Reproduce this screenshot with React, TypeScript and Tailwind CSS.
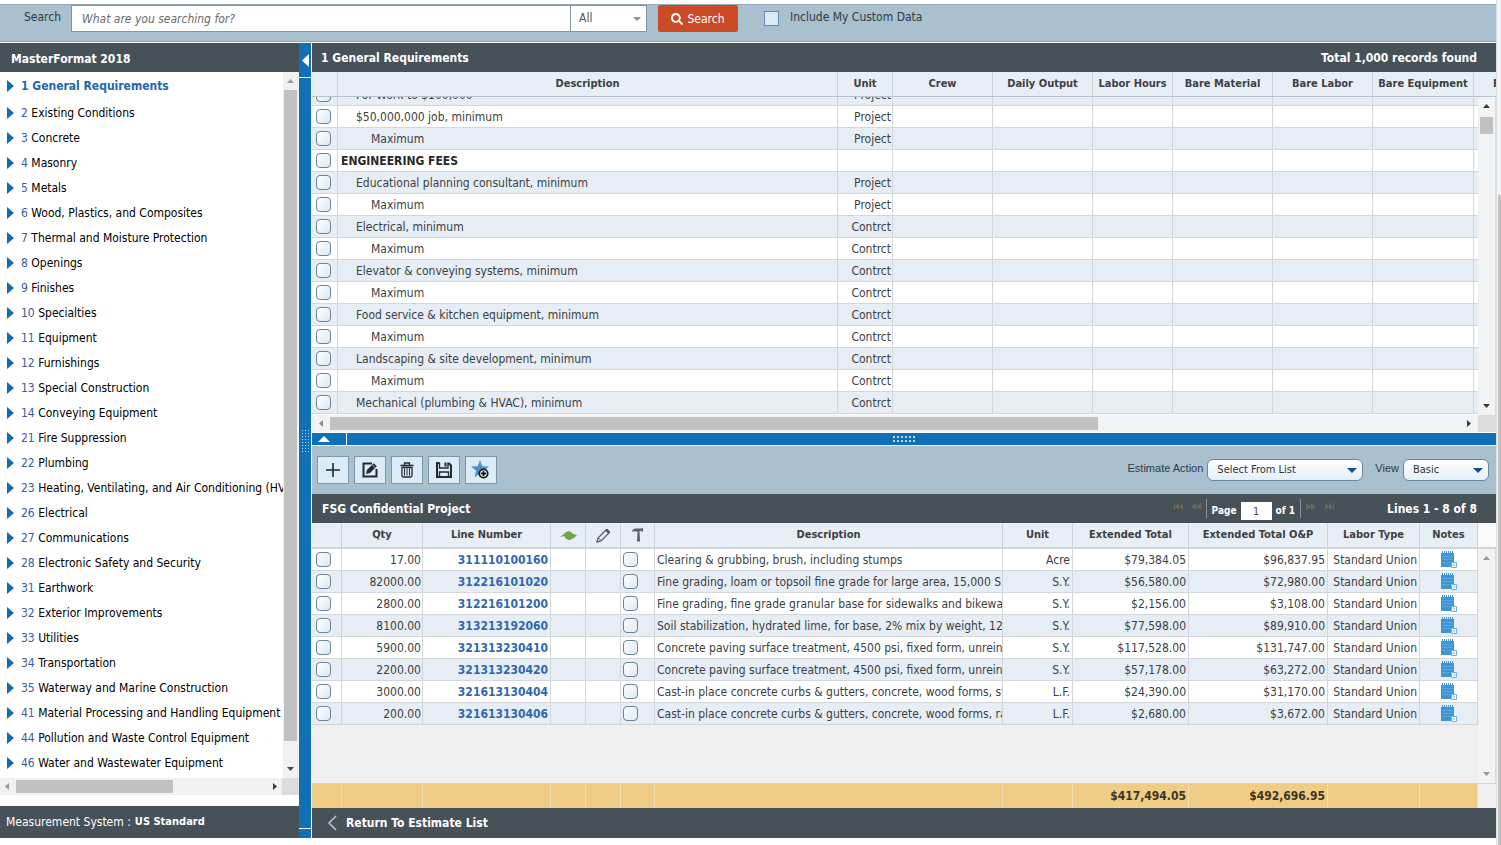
import { useState } from "react";
import { FaSearch } from "react-icons/fa";

interface Division {
  number: string;
  name: string;
}

interface CostRow {
  description: string;
  unit: string;
  level: 0 | 1 | 2;
}

interface EstimateLine {
  qty: string;
  lineNumber: string;
  description: string;
  unit: string;
  total: string;
  totalOp: string;
}

const divisions: Division[] = [
  { number: "2", name: "Existing Conditions" },
  { number: "3", name: "Concrete" },
  { number: "4", name: "Masonry" },
  { number: "5", name: "Metals" },
  { number: "6", name: "Wood, Plastics, and Composites" },
  { number: "7", name: "Thermal and Moisture Protection" },
  { number: "8", name: "Openings" },
  { number: "9", name: "Finishes" },
  { number: "10", name: "Specialties" },
  { number: "11", name: "Equipment" },
  { number: "12", name: "Furnishings" },
  { number: "13", name: "Special Construction" },
  { number: "14", name: "Conveying Equipment" },
  { number: "21", name: "Fire Suppression" },
  { number: "22", name: "Plumbing" },
  { number: "23", name: "Heating, Ventilating, and Air Conditioning (HVAC)" },
  { number: "26", name: "Electrical" },
  { number: "27", name: "Communications" },
  { number: "28", name: "Electronic Safety and Security" },
  { number: "31", name: "Earthwork" },
  { number: "32", name: "Exterior Improvements" },
  { number: "33", name: "Utilities" },
  { number: "34", name: "Transportation" },
  { number: "35", name: "Waterway and Marine Construction" },
  { number: "41", name: "Material Processing and Handling Equipment" },
  { number: "44", name: "Pollution and Waste Control Equipment" },
  { number: "46", name: "Water and Wastewater Equipment" },
];

const costRows: CostRow[] = [
  { description: "For Work to $100,000", unit: "Project", level: 1 },
  { description: "$50,000,000 job, minimum", unit: "Project", level: 1 },
  { description: "Maximum", unit: "Project", level: 2 },
  { description: "ENGINEERING FEES", unit: "", level: 0 },
  {
    description: "Educational planning consultant, minimum",
    unit: "Project",
    level: 1,
  },
  { description: "Maximum", unit: "Project", level: 2 },
  { description: "Electrical, minimum", unit: "Contrct", level: 1 },
  { description: "Maximum", unit: "Contrct", level: 2 },
  {
    description: "Elevator & conveying systems, minimum",
    unit: "Contrct",
    level: 1,
  },
  { description: "Maximum", unit: "Contrct", level: 2 },
  {
    description: "Food service & kitchen equipment, minimum",
    unit: "Contrct",
    level: 1,
  },
  { description: "Maximum", unit: "Contrct", level: 2 },
  {
    description: "Landscaping & site development, minimum",
    unit: "Contrct",
    level: 1,
  },
  { description: "Maximum", unit: "Contrct", level: 2 },
  {
    description: "Mechanical (plumbing & HVAC), minimum",
    unit: "Contrct",
    level: 1,
  },
];

const costColumns = [
  "Description",
  "Unit",
  "Crew",
  "Daily Output",
  "Labor Hours",
  "Bare Material",
  "Bare Labor",
  "Bare Equipment",
  "Bare Total",
];

const estimateLines: EstimateLine[] = [
  {
    qty: "17.00",
    lineNumber: "311110100160",
    description: "Clearing & grubbing, brush, including stumps",
    unit: "Acre",
    total: "$79,384.05",
    totalOp: "$96,837.95",
  },
  {
    qty: "82000.00",
    lineNumber: "312216101020",
    description:
      "Fine grading, loam or topsoil fine grade for large area, 15,000 S.Y.",
    unit: "S.Y.",
    total: "$56,580.00",
    totalOp: "$72,980.00",
  },
  {
    qty: "2800.00",
    lineNumber: "312216101200",
    description:
      "Fine grading, fine grade granular base for sidewalks and bikeways",
    unit: "S.Y.",
    total: "$2,156.00",
    totalOp: "$3,108.00",
  },
  {
    qty: "8100.00",
    lineNumber: "313213192060",
    description:
      'Soil stabilization, hydrated lime, for base, 2% mix by weight, 12"',
    unit: "S.Y.",
    total: "$77,598.00",
    totalOp: "$89,910.00",
  },
  {
    qty: "5900.00",
    lineNumber: "321313230410",
    description:
      "Concrete paving surface treatment, 4500 psi, fixed form, unreinforced",
    unit: "S.Y.",
    total: "$117,528.00",
    totalOp: "$131,747.00",
  },
  {
    qty: "2200.00",
    lineNumber: "321313230420",
    description:
      "Concrete paving surface treatment, 4500 psi, fixed form, unreinforced",
    unit: "S.Y.",
    total: "$57,178.00",
    totalOp: "$63,272.00",
  },
  {
    qty: "3000.00",
    lineNumber: "321613130404",
    description:
      "Cast-in place concrete curbs & gutters, concrete, wood forms, straight",
    unit: "L.F.",
    total: "$24,390.00",
    totalOp: "$31,170.00",
  },
  {
    qty: "200.00",
    lineNumber: "321613130406",
    description:
      "Cast-in place concrete curbs & gutters, concrete, wood forms, radius",
    unit: "L.F.",
    total: "$2,680.00",
    totalOp: "$3,672.00",
  },
];

const headerCell =
  "h-full border-r border-[#ccd2d9] p-0 text-center text-[11px] font-bold whitespace-nowrap text-[#3c4043]";
const bodyCell =
  "h-[22px] overflow-hidden border-r border-b border-[#d3d7db] p-0 leading-4 whitespace-nowrap";

const TickBox = ({
  label,
  className = "ml-1",
}: {
  label: string;
  className?: string;
}) => (
  <input
    type="checkbox"
    aria-label={label}
    className={`block size-[15px] appearance-none rounded border border-[#6c8296] bg-linear-to-br from-white to-[#dbe9f2] checked:bg-[#1270b8] ${className}`}
  />
);

const Arrow = ({
  direction,
  className,
}: {
  direction: "up" | "down" | "left" | "right";
  className: string;
}) => {
  const points = {
    up: "0,10 5,0 10,10",
    down: "0,0 10,0 5,10",
    left: "10,0 10,10 0,5",
    right: "0,0 10,5 0,10",
  };
  return (
    <svg
      viewBox="0 0 10 10"
      preserveAspectRatio="none"
      className={className}
      aria-hidden="true"
    >
      <polygon points={points[direction]} fill="currentColor" />
    </svg>
  );
};

const Grip = ({
  cols,
  rows,
  pitch,
  dot,
}: {
  cols: number;
  rows: number;
  pitch: number;
  dot: number;
}) => (
  <svg
    width={cols * pitch}
    height={rows * pitch}
    fill="#b9d8ee"
    className="shrink-0"
    aria-hidden="true"
  >
    {Array.from({ length: cols * rows }, (_, i) => (
      <rect
        key={i}
        x={(i % cols) * pitch + 1}
        y={Math.floor(i / cols) * pitch + 1}
        width={dot}
        height={dot}
      />
    ))}
  </svg>
);

const SearchBar = () => (
  <form
    className="flex h-[38px] items-start border-y border-[#93aab6] bg-[#a9c0ce] pl-6 text-[#2f3c43]"
    onSubmit={(event) => event.preventDefault()}
  >
    <label htmlFor="search-text" className="w-[47px] pt-1 leading-4">
      Search
    </label>
    <input
      id="search-text"
      type="text"
      placeholder="What are you searching for?"
      className="h-[27px] w-[500px] border border-[#8296a1] bg-white px-2.5 italic outline-none placeholder:text-[#6a6a6a]"
    />
    <div className="relative">
      <select
        aria-label="Search category"
        className="h-[27px] w-[76px] appearance-none border border-l-0 border-[#8296a1] bg-white px-2 pb-0.5 text-[#4d5458]"
      >
        <option>All</option>
      </select>
      <Arrow
        direction="down"
        className="pointer-events-none absolute top-3 right-1.5 h-1 w-2 text-[#8c8c8c]"
      />
    </div>
    <button
      type="submit"
      className="ml-[11px] flex h-[27px] w-20 items-center justify-center gap-1 rounded-xs bg-[#cb4b27] text-white"
    >
      <FaSearch className="size-3" />
      Search
    </button>
    <input
      id="custom-data"
      type="checkbox"
      className="mt-[6px] ml-[26px] size-[15px] appearance-none border border-[#5b8fb5] bg-[#d9e8f1] checked:bg-[#1270b8]"
    />
    <label htmlFor="custom-data" className="pt-1 pl-[11px] leading-4">
      Include My Custom Data
    </label>
  </form>
);

const Sidebar = () => (
  <aside className="flex w-[299px] shrink-0 flex-col bg-white">
    <h2 className="flex h-[29px] items-center bg-[#465158] px-[11px] pt-0.5 font-bold text-white">
      MasterFormat 2018
    </h2>
    <div className="flex">
      <ul className="w-[283px] overflow-hidden pb-[3px] whitespace-nowrap text-black">
        <li className="flex h-7 items-center pl-[7px] font-bold text-[#2367ad]">
          <Arrow direction="right" className="h-3 w-[7px] text-[#0f6cb3]" />
          <a href="#division-1" className="pl-[7px]">
            1 General Requirements
          </a>
        </li>
        {divisions.map((division) => (
          <li
            key={division.number}
            className="flex h-[25px] items-center pl-[7px]"
          >
            <Arrow
              direction="right"
              className="h-3 w-[7px] shrink-0 text-[#0f6cb3]"
            />
            <a href={`#division-${division.number}`} className="pl-[7px]">
              <span className="text-[#3c5c9c]">{division.number}</span>{" "}
              {division.name}
            </a>
          </li>
        ))}
      </ul>
      <div className="flex w-4 flex-col items-center bg-[#f1f1f2] py-[7px] pr-px">
        <Arrow direction="up" className="h-1 w-[7px] text-[#9a9a9a]" />
        <div className="mt-[7px] h-[651px] w-[13px] bg-[#c1c1c1]" />
        <div className="flex-1" />
        <Arrow direction="down" className="h-1 w-[7px] text-[#4a4a4a]" />
      </div>
    </div>
    <div className="flex h-[17px] bg-[#f1f1f2]">
      <div className="flex flex-1 items-center px-[5px]">
        <Arrow direction="left" className="h-[7px] w-1 text-[#9a9a9a]" />
        <div className="ml-[7px] h-[13px] w-[157px] bg-[#c1c1c1]" />
        <div className="flex-1" />
        <Arrow direction="right" className="h-[7px] w-1 text-[#3c3c3c]" />
      </div>
      <div className="w-[17px] bg-[#dcdcdd]" />
    </div>
    <div className="min-h-[11px] flex-1" />
    <p className="flex h-8 items-center gap-1 bg-[#465158] px-1.5 text-white">
      Measurement System : <strong className="text-[11px]">US Standard</strong>
    </p>
  </aside>
);

const VerticalSplitter = () => (
  <div className="mr-px flex w-3 shrink-0 flex-col items-center bg-[#0f70b8]">
    <button
      type="button"
      aria-label="Collapse navigation"
      className="flex h-[35px] w-full items-center justify-center border-b border-white"
    >
      <Arrow direction="left" className="h-[13px] w-[7px] text-white" />
    </button>
    <div className="flex flex-1 items-center pb-6">
      <Grip cols={3} rows={8} pitch={3} dot={1} />
    </div>
    <div className="h-2.5 w-full border-t border-white" />
  </div>
);

const CostColGroup = () => (
  <colgroup>
    <col className="w-[26px]" />
    <col className="w-[500px]" />
    <col className="w-[55px]" />
    <col className="w-[100px]" />
    <col className="w-[100px]" />
    <col className="w-[80px]" />
    <col className="w-[100px]" />
    <col className="w-[100px]" />
    <col className="w-[101px]" />
    <col className="w-[95px]" />
  </colgroup>
);

const CostData = () => (
  <section>
    <header className="flex h-[29px] items-center justify-between bg-[#465158] pr-[19px] pl-[9px] font-bold text-white">
      <h2>1 General Requirements</h2>
      <span>Total 1,000 records found</span>
    </header>
    <div className="overflow-hidden">
      <table className="h-[25px] w-[1257px] table-fixed border-separate border-spacing-0 border-b border-[#b9c0c6] bg-[#e8eef5]">
        <CostColGroup />
        <thead>
          <tr>
            <th aria-label="Select" className={headerCell} />
            {costColumns.map((column) => (
              <th key={column} scope="col" className={headerCell}>
                {column}
              </th>
            ))}
          </tr>
        </thead>
      </table>
    </div>
    <div className="flex h-[318px]">
      {/* anchored to the bottom so the first row stays half scrolled away */}
      <div className="flex min-w-0 flex-1 flex-col justify-end overflow-hidden pb-px">
        <table className="w-[1257px] shrink-0 table-fixed border-separate border-spacing-0 text-[#3b3f42]">
          <CostColGroup />
          <tbody>
            {costRows.map((row, index) => (
              <tr key={index} className="odd:bg-[#e6edf5] even:bg-white">
                <td className={bodyCell}>
                  <TickBox label={`Select ${row.description}`} />
                </td>
                <td
                  className={`${bodyCell} ${
                    row.level === 0
                      ? "pl-[3px] font-bold text-[#26292b]"
                      : row.level === 1
                        ? "pl-[18px]"
                        : "pl-[33px]"
                  }`}
                >
                  {row.description}
                </td>
                <td className={`${bodyCell} pr-px text-right`}>{row.unit}</td>
                <td className={bodyCell} />
                <td className={bodyCell} />
                <td className={bodyCell} />
                <td className={bodyCell} />
                <td className={bodyCell} />
                <td className={bodyCell} />
                <td className={bodyCell} />
              </tr>
            ))}
          </tbody>
        </table>
      </div>
      <div className="flex w-[18px] flex-col items-center border-r border-[#d9dcdf] bg-[#f1f3f4] py-[7px]">
        <Arrow direction="up" className="h-1 w-[7px] text-[#3c3c3c]" />
        <div className="mt-[9px] h-[17px] w-[13px] bg-[#c1c1c1]" />
        <div className="flex-1" />
        <Arrow direction="down" className="h-1 w-[7px] text-[#3c3c3c]" />
      </div>
    </div>
    <div className="flex h-[17px] bg-[#f1f3f4]">
      <div className="flex flex-1 items-center px-[7px]">
        <Arrow direction="left" className="h-[7px] w-1 text-[#8c8c8c]" />
        <div className="ml-[7px] h-[13px] w-2/3 bg-[#c1c1c1]" />
        <div className="flex-1" />
        <Arrow direction="right" className="h-[7px] w-1 text-[#3c3c3c]" />
      </div>
      <div className="w-[18px] bg-[#dcdcdd]" />
    </div>
  </section>
);

const HorizontalSplitter = () => (
  <div className="flex h-3.5 items-center border-y border-white bg-[#0f70b8]">
    <button
      type="button"
      aria-label="Collapse cost data"
      className="flex h-full w-[35px] items-center border-r border-white pl-1.5"
    >
      <Arrow direction="up" className="h-1.5 w-3 text-white" />
    </button>
    <div className="flex flex-1 justify-center pr-[35px]">
      <Grip cols={6} rows={2} pitch={4} dot={2} />
    </div>
  </div>
);

const toolbarButton =
  "flex h-7 w-8 items-center justify-center border border-[#7c97a7] bg-[#dbecf7] text-[#1f2a31]";
const toolbarSelect =
  "h-[22px] w-full appearance-none rounded-md border border-[#6d8799] bg-linear-to-b from-white to-[#e3eff8] px-[9px] text-[11px] text-[#2f3438]";

const Toolbar = () => (
  <div className="flex h-12 items-center justify-between bg-[#a9c0ce] pr-[7px] pl-[5px]">
    <div className="flex gap-[5px]">
      <button type="button" aria-label="Add line" className={toolbarButton}>
        <svg width="16" height="16" stroke="currentColor" strokeWidth="1.6">
          <path d="M8 1v14M1 8h14" />
        </svg>
      </button>
      <button type="button" aria-label="Edit line" className={toolbarButton}>
        <svg width="18" height="18" viewBox="0 0 18 18" fill="none">
          <path
            d="M11 2.500H2.500v13h13V8"
            stroke="currentColor"
            strokeWidth="2"
          />
          <path
            d="M5 13l.9-4 6.800-6.800 3.100 3.100-6.800 6.800z"
            fill="currentColor"
          />
          <path
            d="M11.200 3.900l2.900 2.900"
            stroke="#dbecf7"
            strokeWidth=".7"
          />
        </svg>
      </button>
      <button type="button" aria-label="Delete line" className={toolbarButton}>
        <svg
          width="16"
          height="16"
          viewBox="0 0 16 16"
          fill="none"
          stroke="currentColor"
        >
          <path d="M1.500 3.500h13" strokeWidth="1.600" />
          <path d="M5.500 3V1h5v2" strokeWidth="1.300" />
          <path
            d="M3 5.500h10v8q0 1.500-1.500 1.500h-7Q3 15 3 13.500z"
            strokeWidth="1.300"
          />
          <path d="M5.500 6.500v7M8 6.500v7M10.500 6.500v7" />
        </svg>
      </button>
      <button type="button" aria-label="Save" className={toolbarButton}>
        <svg
          width="18"
          height="18"
          viewBox="0 0 18 18"
          fill="none"
          stroke="currentColor"
        >
          <path d="M4.500 2H2v14h14V4.500L13.500 2" strokeWidth="2" />
          <path d="M4.500 1.500v5.500h8.500V1.500" strokeWidth="1.400" />
          <path d="M10.500 1.500v4" strokeWidth="2" />
          <path d="M4.500 16v-5h9v5" strokeWidth="1.400" />
        </svg>
      </button>
      <button
        type="button"
        aria-label="Add to favorites"
        className={toolbarButton}
      >
        <svg width="20" height="20" viewBox="0 0 20 20">
          <path
            d="M9 0l2.400 6.300 6.600.3-5.200 4.100 1.800 6.500L9 13.500l-5.600 3.700 1.800-6.500L0 6.600l6.600-.3z"
            fill="#4a92cf"
          />
          <circle
            cx="12.500"
            cy="13.500"
            r="4.200"
            fill="#fff"
            stroke="#15191c"
            strokeWidth="1.800"
          />
          <path
            d="M12.500 11v5M10 13.500h5"
            stroke="#15191c"
            strokeWidth="1.800"
          />
        </svg>
      </button>
    </div>
    <div className="flex items-center text-[#2f3c43]">
      <label
        htmlFor="estimate-action"
        className="pr-1 pb-1 font-['Liberation_Sans',sans-serif] text-[11px]"
      >
        Estimate Action
      </label>
      <div className="relative w-[156px]">
        <select id="estimate-action" className={toolbarSelect}>
          <option>Select From List</option>
        </select>
        <Arrow
          direction="down"
          className="pointer-events-none absolute top-[9px] right-1.5 h-[5px] w-2.5 text-[#154f8f]"
        />
      </div>
      <label
        htmlFor="view"
        className="pr-1 pb-1 pl-3 font-['Liberation_Sans',sans-serif] text-[11px]"
      >
        View
      </label>
      <div className="relative w-[86px]">
        <select id="view" className={toolbarSelect}>
          <option>Basic</option>
        </select>
        <Arrow
          direction="down"
          className="pointer-events-none absolute top-[9px] right-1.5 h-[5px] w-2.5 text-[#154f8f]"
        />
      </div>
    </div>
  </div>
);

const PagerIcon = ({ kind }: { kind: "first" | "prev" | "next" | "last" }) => {
  const shapes = {
    first: "M0 0h1v7h-1zM5 0v7l-4-3.500zM9 0v7l-4-3.500z",
    prev: "M5 0v7l-5-3.500zM10 0v7l-5-3.500z",
    next: "M0 0v7l5-3.500zM5 0v7l5-3.500z",
    last: "M0 0v7l4-3.500zM4 0v7l4-3.500zM8 0h1v7h-1z",
  };
  return (
    <svg width="10" height="7" aria-hidden="true">
      <path d={shapes[kind]} fill="#6d675a" />
    </svg>
  );
};

const Pager = () => (
  <div className="flex items-center">
    <div className="flex gap-[7px] pb-1">
      <button type="button" aria-label="First page" disabled>
        <PagerIcon kind="first" />
      </button>
      <button type="button" aria-label="Previous page" disabled>
        <PagerIcon kind="prev" />
      </button>
    </div>
    <div className="mx-[5px] h-[19px] w-px bg-[#83919a]" />
    <label htmlFor="page-number" className="pt-1 text-[10px]">
      Page
    </label>
    <input
      id="page-number"
      type="text"
      defaultValue="1"
      className="mx-1 mt-[5px] h-[18px] w-[31px] bg-white text-center text-[10px] font-normal text-[#3b3f42] outline-none"
    />
    <span className="pt-1 text-[10px]">of 1</span>
    <div className="mx-[5px] h-[19px] w-px bg-[#83919a]" />
    <div className="flex gap-[9px] pb-1">
      <button type="button" aria-label="Next page" disabled>
        <PagerIcon kind="next" />
      </button>
      <button type="button" aria-label="Last page" disabled>
        <PagerIcon kind="last" />
      </button>
    </div>
  </div>
);

const EstimateColGroup = () => (
  <colgroup>
    <col className="w-[30px]" />
    <col className="w-[81px]" />
    <col className="w-[128px]" />
    <col className="w-[35px]" />
    <col className="w-[35px]" />
    <col className="w-[34px]" />
    <col />
    <col className="w-[70px]" />
    <col className="w-[116px]" />
    <col className="w-[139px]" />
    <col className="w-[92px]" />
    <col className="w-[58px]" />
  </colgroup>
);

const NoteIcon = () => (
  <svg width="17" height="17" viewBox="0 0 17 17" aria-hidden="true">
    <path d="M1 2h13v14H1z" fill="#3f94d2" />
    <path
      d="M2.500 0v3M4.500 0v3M6.500 0v3M8.500 0v3M10.500 0v3M12.500 0v3"
      stroke="#3f94d2"
    />
    <path d="M2 5.500h11M2 8.500h11M2 11.500h8" stroke="#5ba6dc" />
    <path d="M11 11h6v6h-6z" fill="#fff" />
    <path d="M11.500 11.500h5v5h-5z" fill="#fff" stroke="#6fb2e2" />
    <path d="M14 12.500v3M12.500 14h3" stroke="#6fb2e2" strokeWidth=".6" />
  </svg>
);

const EstimateGrid = () => (
  <section>
    <header className="flex h-[29px] items-center bg-[#465158] pr-[19px] pl-2.5 font-bold text-white">
      <h2 className="flex-1">FSG Confidential Project</h2>
      <Pager />
      <span className="w-[142px] text-right">Lines 1 - 8 of 8</span>
    </header>
    <div className="border-b-2 border-[#d0d4d8] bg-[#fafafa] pr-[18px]">
      <table className="h-6 w-full table-fixed border-separate border-spacing-0 bg-[#e8eef5]">
        <EstimateColGroup />
        <thead>
          <tr>
            <th aria-label="Select" className={headerCell} />
            <th scope="col" className={headerCell}>
              Qty
            </th>
            <th scope="col" className={headerCell}>
              Line Number
            </th>
            <th aria-label="Green" className={headerCell}>
              <svg width="17" height="9" className="mx-auto">
                <path
                  d="M0 6Q4 3 6 1Q10-1 13 3L17 4Q14 8 10 9Q6 9 4 5Z"
                  fill="#72a544"
                />
              </svg>
            </th>
            <th aria-label="Edited" className={headerCell}>
              <svg
                width="15"
                height="15"
                viewBox="0 0 15 15"
                fill="none"
                stroke="#565e64"
                className="mx-auto"
              >
                <path d="M1 14l1-4 8-8 3 3-8 8z" strokeWidth="1.300" />
                <path d="M9.500 2.500l1.500-1.500 3 3-1.500 1.500z" fill="#565e64" />
                <path d="M2.500 10l2.500 2.500" />
              </svg>
            </th>
            <th aria-label="Labor" className={headerCell}>
              <svg
                width="12"
                height="14"
                viewBox="0 0 12 14"
                className="mx-auto"
              >
                <path
                  d="M0 3Q1 0 4 .5H9L11 0V4L9 3H7.500L8 13.500H5L5.500 3.500H3Q1 3 0 4z"
                  fill="#5b6267"
                />
              </svg>
            </th>
            {[
              "Description",
              "Unit",
              "Extended Total",
              "Extended Total O&P",
              "Labor Type",
              "Notes",
            ].map((column) => (
              <th key={column} scope="col" className={headerCell}>
                {column}
              </th>
            ))}
          </tr>
        </thead>
      </table>
    </div>
    <div className="flex h-[235px] border-b border-[#d5d5d6] bg-[#efeff0]">
      <div className="min-w-0 flex-1">
        <table className="w-full table-fixed border-separate border-spacing-0 text-[#3b3f42]">
          <EstimateColGroup />
          <tbody>
            {estimateLines.map((line) => (
              <tr
                key={line.lineNumber}
                className="odd:bg-white even:bg-[#e6edf5]"
              >
                <td className={bodyCell}>
                  <TickBox label={`Select line ${line.lineNumber}`} />
                </td>
                <td className={`${bodyCell} pr-px text-right`}>{line.qty}</td>
                <td className={`${bodyCell} pr-0.5 text-right`}>
                  <a
                    href={`#line-${line.lineNumber}`}
                    className="font-bold text-[#2f67ad]"
                  >
                    {line.lineNumber}
                  </a>
                </td>
                <td className={bodyCell} />
                <td className={bodyCell} />
                <td className={bodyCell}>
                  <TickBox
                    label={`Labor for line ${line.lineNumber}`}
                    className="ml-0.5"
                  />
                </td>
                <td className={`${bodyCell} pl-0.5`}>{line.description}</td>
                <td className={`${bodyCell} pr-0.5 text-right`}>{line.unit}</td>
                <td className={`${bodyCell} pr-0.5 text-right`}>
                  {line.total}
                </td>
                <td className={`${bodyCell} pr-0.5 text-right`}>
                  {line.totalOp}
                </td>
                <td className={`${bodyCell} pr-0.5 text-right`}>
                  Standard Union
                </td>
                <td className={bodyCell}>
                  <button
                    type="button"
                    aria-label="Add note"
                    className="mx-auto block"
                  >
                    <NoteIcon />
                  </button>
                </td>
              </tr>
            ))}
          </tbody>
        </table>
      </div>
      <div className="flex w-[18px] flex-col items-center justify-between border-r border-[#d9dcdf] bg-[#f3f3f4] py-[7px]">
        <Arrow direction="up" className="h-1 w-[7px] text-[#9a9a9a]" />
        <Arrow direction="down" className="h-1 w-[7px] text-[#9a9a9a]" />
      </div>
    </div>
    <div className="bg-[#efeff0] pr-[18px]">
      <table className="h-6 w-full table-fixed border-separate border-spacing-0 bg-[#efcd84] font-bold text-[#3c3526]">
        <EstimateColGroup />
        <tbody>
          <tr>
            {Array.from({ length: 12 }, (_, i) => (
              <td
                key={i}
                className="border-r border-[#f3dfb4] p-0 pr-0.5 text-right"
              >
                {i === 8 ? "$417,494.05" : i === 9 ? "$492,696.95" : null}
              </td>
            ))}
          </tr>
        </tbody>
      </table>
    </div>
  </section>
);

const App = () => {
  const [returning, setReturning] = useState(false);

  return (
    <div className="flex min-h-screen bg-white font-['DejaVu_Sans_Condensed','Noto_Sans',sans-serif] text-[12px] leading-4">
      <div className="min-w-0 flex-1 pt-1">
        <SearchBar />
        <div className="flex pt-px">
          <Sidebar />
          <VerticalSplitter />
          <main className="min-w-0 flex-1">
            <CostData />
            <HorizontalSplitter />
            <Toolbar />
            <EstimateGrid />
            <footer className="flex h-[30px] items-center bg-[#465158] pl-4 text-white">
              <button
                type="button"
                aria-busy={returning}
                onClick={() => setReturning(true)}
                className="flex items-center gap-[9px] font-bold"
              >
                <svg width="9" height="16" fill="none" stroke="#c3cacd">
                  <path d="M8 1L1 8l7 7" strokeWidth="1.500" />
                </svg>
                Return To Estimate List
              </button>
            </footer>
          </main>
        </div>
      </div>
      <div className="flex w-[5px] flex-col border-l border-[#dcdfe1] bg-[#f1f3f4] pl-px">
        <div className="h-[195px]" />
        <div className="flex-1 bg-[#c1c1c1]" />
      </div>
    </div>
  );
};

export default App;
